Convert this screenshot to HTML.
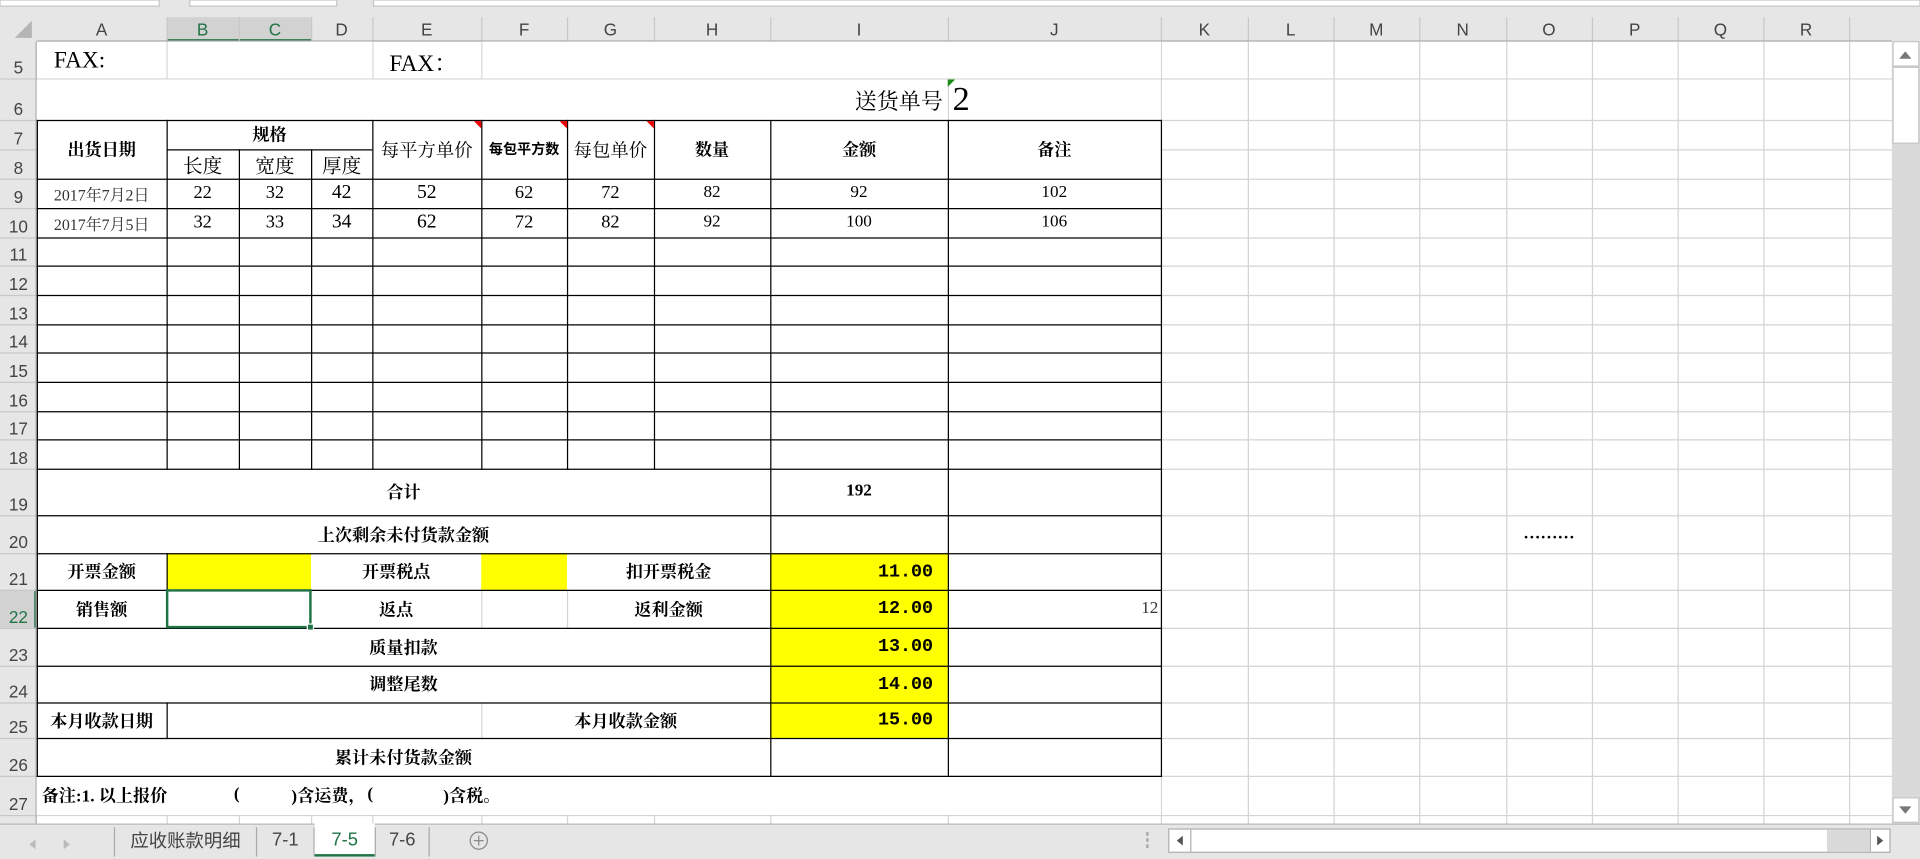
<!DOCTYPE html>
<html><head><meta charset="utf-8">
<style>
html,body{margin:0;padding:0;background:#fff;overflow:hidden;width:1920px;height:859px}
#w{position:absolute;left:0;top:0;width:1568px;height:702px;transform:scale(1.22449,1.22365);transform-origin:0 0;background:#fff;overflow:hidden}
.t{position:absolute;display:flex;align-items:center;justify-content:center;white-space:nowrap;font-family:"Liberation Serif","Noto Serif CJK SC",serif;color:#000}
.b{font-weight:bold}
.m{font-family:"Liberation Mono","Noto Serif CJK SC",monospace}
.h{position:absolute;top:14px;height:20px;display:flex;align-items:center;justify-content:center;font-family:"Liberation Sans",sans-serif;font-size:14px;color:#444}
.r{position:absolute;left:0;width:30px;display:flex;align-items:flex-end;justify-content:center;padding-bottom:1px;box-sizing:border-box;font-family:"Liberation Sans",sans-serif;font-size:14px;color:#444}
</style></head><body><div id="w">
<svg width="1568" height="702" style="position:absolute;left:0;top:0">
<rect x="0" y="0" width="1568" height="34" fill="#e6e6e6"/>
<rect x="0" y="0" width="130" height="5" fill="#fff" stroke="#c6c6c6"/>
<rect x="155" y="0" width="120" height="5" fill="#fff" stroke="#c6c6c6"/>
<rect x="305" y="0" width="1263" height="5" fill="#fff" stroke="#c6c6c6"/>
<rect x="136" y="14" width="118" height="20" fill="#d2d2d2"/>
<rect x="136" y="32" width="118" height="2" fill="#217346"/>
<rect x="0" y="34" width="30" height="639" fill="#e6e6e6"/>
<rect x="0" y="482" width="30" height="31" fill="#d2d2d2"/>
<rect x="28" y="482" width="2" height="31" fill="#217346"/>
<polygon points="26,17 26,31 12,31" fill="#b5b5b5"/>
<g stroke="#c8c8c8" stroke-width="1">
<line x1="136.5" y1="14" x2="136.5" y2="34"/><line x1="195.5" y1="14" x2="195.5" y2="34"/><line x1="254.5" y1="14" x2="254.5" y2="34"/><line x1="304.5" y1="14" x2="304.5" y2="34"/><line x1="393.5" y1="14" x2="393.5" y2="34"/><line x1="463.5" y1="14" x2="463.5" y2="34"/><line x1="534.5" y1="14" x2="534.5" y2="34"/><line x1="629.5" y1="14" x2="629.5" y2="34"/><line x1="774.5" y1="14" x2="774.5" y2="34"/><line x1="948.5" y1="14" x2="948.5" y2="34"/><line x1="1019.5" y1="14" x2="1019.5" y2="34"/><line x1="1089.5" y1="14" x2="1089.5" y2="34"/><line x1="1159.5" y1="14" x2="1159.5" y2="34"/><line x1="1230.5" y1="14" x2="1230.5" y2="34"/><line x1="1300.5" y1="14" x2="1300.5" y2="34"/><line x1="1370.5" y1="14" x2="1370.5" y2="34"/><line x1="1440.5" y1="14" x2="1440.5" y2="34"/><line x1="1510.5" y1="14" x2="1510.5" y2="34"/>
<line x1="0" y1="64.5" x2="30" y2="64.5"/><line x1="0" y1="98.5" x2="30" y2="98.5"/><line x1="0" y1="122.5" x2="30" y2="122.5"/><line x1="0" y1="146.5" x2="30" y2="146.5"/><line x1="0" y1="170.5" x2="30" y2="170.5"/><line x1="0" y1="194.5" x2="30" y2="194.5"/><line x1="0" y1="217.5" x2="30" y2="217.5"/><line x1="0" y1="241.5" x2="30" y2="241.5"/><line x1="0" y1="265.5" x2="30" y2="265.5"/><line x1="0" y1="288.5" x2="30" y2="288.5"/><line x1="0" y1="312.5" x2="30" y2="312.5"/><line x1="0" y1="336.5" x2="30" y2="336.5"/><line x1="0" y1="359.5" x2="30" y2="359.5"/><line x1="0" y1="383.5" x2="30" y2="383.5"/><line x1="0" y1="421.5" x2="30" y2="421.5"/><line x1="0" y1="452.5" x2="30" y2="452.5"/><line x1="0" y1="482.5" x2="30" y2="482.5"/><line x1="0" y1="513.5" x2="30" y2="513.5"/><line x1="0" y1="544.5" x2="30" y2="544.5"/><line x1="0" y1="574.5" x2="30" y2="574.5"/><line x1="0" y1="603.5" x2="30" y2="603.5"/><line x1="0" y1="634.5" x2="30" y2="634.5"/><line x1="0" y1="666.5" x2="30" y2="666.5"/>
</g>
<line x1="30" y1="33.5" x2="1545" y2="33.5" stroke="#ababab"/>
<line x1="29.5" y1="34" x2="29.5" y2="673" stroke="#ababab"/>
<g stroke="#d4d4d4" stroke-width="1">
<line x1="136.5" y1="34" x2="136.5" y2="673"/><line x1="195.5" y1="34" x2="195.5" y2="673"/><line x1="254.5" y1="34" x2="254.5" y2="673"/><line x1="304.5" y1="34" x2="304.5" y2="673"/><line x1="393.5" y1="34" x2="393.5" y2="673"/><line x1="463.5" y1="34" x2="463.5" y2="673"/><line x1="534.5" y1="34" x2="534.5" y2="673"/><line x1="629.5" y1="34" x2="629.5" y2="673"/><line x1="774.5" y1="34" x2="774.5" y2="673"/><line x1="948.5" y1="34" x2="948.5" y2="673"/><line x1="1019.5" y1="34" x2="1019.5" y2="673"/><line x1="1089.5" y1="34" x2="1089.5" y2="673"/><line x1="1159.5" y1="34" x2="1159.5" y2="673"/><line x1="1230.5" y1="34" x2="1230.5" y2="673"/><line x1="1300.5" y1="34" x2="1300.5" y2="673"/><line x1="1370.5" y1="34" x2="1370.5" y2="673"/><line x1="1440.5" y1="34" x2="1440.5" y2="673"/><line x1="1510.5" y1="34" x2="1510.5" y2="673"/>
<line x1="30" y1="64.5" x2="1545" y2="64.5"/><line x1="30" y1="98.5" x2="1545" y2="98.5"/><line x1="30" y1="122.5" x2="1545" y2="122.5"/><line x1="30" y1="146.5" x2="1545" y2="146.5"/><line x1="30" y1="170.5" x2="1545" y2="170.5"/><line x1="30" y1="194.5" x2="1545" y2="194.5"/><line x1="30" y1="217.5" x2="1545" y2="217.5"/><line x1="30" y1="241.5" x2="1545" y2="241.5"/><line x1="30" y1="265.5" x2="1545" y2="265.5"/><line x1="30" y1="288.5" x2="1545" y2="288.5"/><line x1="30" y1="312.5" x2="1545" y2="312.5"/><line x1="30" y1="336.5" x2="1545" y2="336.5"/><line x1="30" y1="359.5" x2="1545" y2="359.5"/><line x1="30" y1="383.5" x2="1545" y2="383.5"/><line x1="30" y1="421.5" x2="1545" y2="421.5"/><line x1="30" y1="452.5" x2="1545" y2="452.5"/><line x1="30" y1="482.5" x2="1545" y2="482.5"/><line x1="30" y1="513.5" x2="1545" y2="513.5"/><line x1="30" y1="544.5" x2="1545" y2="544.5"/><line x1="30" y1="574.5" x2="1545" y2="574.5"/><line x1="30" y1="603.5" x2="1545" y2="603.5"/><line x1="30" y1="634.5" x2="1545" y2="634.5"/><line x1="30" y1="666.5" x2="1545" y2="666.5"/>
</g>
<rect x="137" y="34" width="167" height="30" fill="#fff"/>
<rect x="394" y="34" width="554" height="30" fill="#fff"/>
<rect x="30" y="65" width="744" height="33" fill="#fff"/>
<rect x="30" y="98" width="918" height="536" fill="#fff"/>
<rect x="30" y="635" width="918" height="31" fill="#fff"/>
<rect x="136" y="452" width="118" height="30" fill="#ffff00"/>
<rect x="393" y="452" width="70" height="30" fill="#ffff00"/>
<rect x="629" y="452" width="145" height="151" fill="#ffff00"/>
<g stroke="#d4d4d4" stroke-width="1">
<line x1="393.5" y1="483" x2="393.5" y2="513"/><line x1="463.5" y1="483" x2="463.5" y2="513"/><line x1="393.5" y1="575" x2="393.5" y2="603"/>
</g>
<g stroke="#000" stroke-width="1">
<line x1="30" y1="98.5" x2="949" y2="98.5"/><line x1="30" y1="146.5" x2="949" y2="146.5"/><line x1="30" y1="170.5" x2="949" y2="170.5"/><line x1="30" y1="194.5" x2="949" y2="194.5"/><line x1="30" y1="217.5" x2="949" y2="217.5"/><line x1="30" y1="241.5" x2="949" y2="241.5"/><line x1="30" y1="265.5" x2="949" y2="265.5"/><line x1="30" y1="288.5" x2="949" y2="288.5"/><line x1="30" y1="312.5" x2="949" y2="312.5"/><line x1="30" y1="336.5" x2="949" y2="336.5"/><line x1="30" y1="359.5" x2="949" y2="359.5"/><line x1="30" y1="383.5" x2="949" y2="383.5"/><line x1="30" y1="421.5" x2="949" y2="421.5"/><line x1="30" y1="452.5" x2="949" y2="452.5"/><line x1="30" y1="482.5" x2="949" y2="482.5"/><line x1="30" y1="513.5" x2="949" y2="513.5"/><line x1="30" y1="544.5" x2="949" y2="544.5"/><line x1="30" y1="574.5" x2="949" y2="574.5"/><line x1="30" y1="603.5" x2="949" y2="603.5"/><line x1="30" y1="634.5" x2="949" y2="634.5"/>
<line x1="136" y1="122.5" x2="304" y2="122.5"/>
<line x1="30.5" y1="98" x2="30.5" y2="635"/><line x1="948.5" y1="98" x2="948.5" y2="635"/><line x1="774.5" y1="98" x2="774.5" y2="635"/><line x1="629.5" y1="98" x2="629.5" y2="635"/>
<line x1="136.5" y1="98" x2="136.5" y2="384"/><line x1="136.5" y1="452" x2="136.5" y2="514"/><line x1="136.5" y1="574" x2="136.5" y2="604"/>
<line x1="195.5" y1="122" x2="195.5" y2="384"/>
<line x1="254.5" y1="122" x2="254.5" y2="384"/>
<line x1="304.5" y1="98" x2="304.5" y2="384"/>
<line x1="393.5" y1="98" x2="393.5" y2="384"/>
<line x1="463.5" y1="98" x2="463.5" y2="384"/>
<line x1="534.5" y1="98" x2="534.5" y2="384"/>
</g>
<polygon points="387,99 393,99 393,105" fill="#e00"/>
<polygon points="457,99 463,99 463,105" fill="#e00"/>
<polygon points="528,99 534,99 534,105" fill="#e00"/>
<polygon points="774,65 780,65 774,71" fill="#1a8a1a"/>
<rect x="136.5" y="482.5" width="117" height="30" fill="none" stroke="#217346" stroke-width="2"/>
<rect x="251" y="510" width="5" height="5" fill="#217346" stroke="#fff" stroke-width="1"/>
<rect x="1545" y="34" width="23" height="639" fill="#dadada"/>
<rect x="1546" y="34" width="21" height="20" fill="#fff" stroke="#c6c6c6"/>
<polygon points="1551,48 1561,48 1556,42" fill="#777"/>
<rect x="1546" y="55" width="21" height="62" fill="#fff" stroke="#c6c6c6"/>
<rect x="1546" y="652" width="21" height="20" fill="#fff" stroke="#c6c6c6"/>
<polygon points="1551,659 1561,659 1556,665" fill="#777"/>
<rect x="0" y="673" width="1568" height="29" fill="#e6e6e6"/>
<line x1="0" y1="673.5" x2="1568" y2="673.5" stroke="#b8b8b8"/>
<polygon points="29,686 24,690 29,694" fill="#bbb"/>
<polygon points="52,686 57,690 52,694" fill="#bbb"/>
<line x1="93.5" y1="676" x2="93.5" y2="700" stroke="#aaa"/>
<line x1="209.5" y1="676" x2="209.5" y2="700" stroke="#aaa"/>
<line x1="256.5" y1="676" x2="256.5" y2="700" stroke="#aaa"/>
<rect x="257" y="673" width="49" height="27" fill="#fff"/>
<rect x="257" y="698" width="49" height="2" fill="#217346"/>
<line x1="306.5" y1="676" x2="306.5" y2="700" stroke="#aaa"/>
<line x1="350.5" y1="676" x2="350.5" y2="700" stroke="#aaa"/>
<circle cx="391" cy="687" r="7" fill="none" stroke="#888"/>
<line x1="387" y1="687" x2="395" y2="687" stroke="#888"/><line x1="391" y1="683" x2="391" y2="691" stroke="#888"/>
<rect x="936" y="680" width="2" height="3" fill="#aaa"/><rect x="936" y="685" width="2" height="3" fill="#aaa"/><rect x="936" y="690" width="2" height="3" fill="#aaa"/>
<rect x="954.5" y="677.5" width="589" height="19" fill="#fff" stroke="#b0b0b0"/>
<rect x="1492" y="678" width="35" height="18" fill="#dadada"/>
<line x1="972.5" y1="678" x2="972.5" y2="696" stroke="#b0b0b0"/>
<line x1="1527.5" y1="678" x2="1527.5" y2="696" stroke="#b0b0b0"/>
<polygon points="966,683 961,687 966,691" fill="#555"/>
<polygon points="1533,683 1538,687 1533,691" fill="#555"/>
</svg>

<div class="h" style="left:30px;width:106px">A</div>
<div class="h" style="left:136px;width:59px;color:#217346">B</div>
<div class="h" style="left:195px;width:59px;color:#217346">C</div>
<div class="h" style="left:254px;width:50px">D</div>
<div class="h" style="left:304px;width:89px">E</div>
<div class="h" style="left:393px;width:70px">F</div>
<div class="h" style="left:463px;width:71px">G</div>
<div class="h" style="left:534px;width:95px">H</div>
<div class="h" style="left:629px;width:145px">I</div>
<div class="h" style="left:774px;width:174px">J</div>
<div class="h" style="left:948px;width:71px">K</div>
<div class="h" style="left:1019px;width:70px">L</div>
<div class="h" style="left:1089px;width:70px">M</div>
<div class="h" style="left:1159px;width:71px">N</div>
<div class="h" style="left:1230px;width:70px">O</div>
<div class="h" style="left:1300px;width:70px">P</div>
<div class="h" style="left:1370px;width:70px">Q</div>
<div class="h" style="left:1440px;width:70px">R</div>
<div class="r" style="top:34px;height:30px">5</div>
<div class="r" style="top:64px;height:34px">6</div>
<div class="r" style="top:98px;height:24px">7</div>
<div class="r" style="top:122px;height:24px">8</div>
<div class="r" style="top:146px;height:24px">9</div>
<div class="r" style="top:170px;height:24px">10</div>
<div class="r" style="top:194px;height:23px">11</div>
<div class="r" style="top:217px;height:24px">12</div>
<div class="r" style="top:241px;height:24px">13</div>
<div class="r" style="top:265px;height:23px">14</div>
<div class="r" style="top:288px;height:24px">15</div>
<div class="r" style="top:312px;height:24px">16</div>
<div class="r" style="top:336px;height:23px">17</div>
<div class="r" style="top:359px;height:24px">18</div>
<div class="r" style="top:383px;height:38px">19</div>
<div class="r" style="top:421px;height:31px">20</div>
<div class="r" style="top:452px;height:30px">21</div>
<div class="r" style="top:482px;height:31px;color:#217346">22</div>
<div class="r" style="top:513px;height:31px">23</div>
<div class="r" style="top:544px;height:30px">24</div>
<div class="r" style="top:574px;height:29px">25</div>
<div class="r" style="top:603px;height:31px">26</div>
<div class="r" style="top:634px;height:32px">27</div>

<div class="t" style="left:44px;top:36px;height:28px;font-size:19px;justify-content:flex-start">FAX:</div>
<div class="t" style="left:318px;top:36px;height:28px;font-size:19px;justify-content:flex-start">FAX：</div>
<div class="t" style="left:600px;top:66px;width:170px;height:32px;font-size:18px;justify-content:flex-end">送货单号</div>
<div class="t" style="left:778px;top:64px;height:36px;font-size:28px;justify-content:flex-start">2</div>

<div class="t b" style="left:30px;top:98px;width:106px;height:48px;font-size:14px">出货日期</div>
<div class="t b" style="left:136px;top:98px;width:168px;height:24px;font-size:14px">规格</div>
<div class="t" style="left:136px;top:122px;width:59px;height:24px;font-size:16px">长度</div>
<div class="t" style="left:195px;top:122px;width:59px;height:24px;font-size:16px">宽度</div>
<div class="t" style="left:254px;top:122px;width:50px;height:24px;font-size:16px">厚度</div>
<div class="t" style="left:304px;top:98px;width:89px;height:48px;font-size:15px">每平方单价</div>
<div class="t b" style="left:393px;top:98px;width:70px;height:48px;font-size:11.5px;font-family:'Liberation Sans','Noto Sans CJK SC',sans-serif">每包平方数</div>
<div class="t" style="left:463px;top:98px;width:71px;height:48px;font-size:15px">每包单价</div>
<div class="t b" style="left:534px;top:98px;width:95px;height:48px;font-size:14px">数量</div>
<div class="t b" style="left:629px;top:98px;width:145px;height:48px;font-size:14px">金额</div>
<div class="t b" style="left:774px;top:98px;width:174px;height:48px;font-size:14px">备注</div>

<div class="t" style="left:30px;top:146px;width:106px;height:24px;font-size:13px;color:#333">2017年7月2日</div>
<div class="t" style="left:136px;top:146px;width:59px;height:24px;font-size:15px">22</div>
<div class="t" style="left:195px;top:146px;width:59px;height:24px;font-size:15px">32</div>
<div class="t" style="left:254px;top:146px;width:50px;height:24px;font-size:16px">42</div>
<div class="t" style="left:304px;top:146px;width:89px;height:24px;font-size:16px">52</div>
<div class="t" style="left:393px;top:146px;width:70px;height:24px;font-size:15px">62</div>
<div class="t" style="left:463px;top:146px;width:71px;height:24px;font-size:15px">72</div>
<div class="t" style="left:534px;top:146px;width:95px;height:24px;font-size:14px">82</div>
<div class="t" style="left:629px;top:146px;width:145px;height:24px;font-size:14px">92</div>
<div class="t" style="left:774px;top:146px;width:174px;height:24px;font-size:14px">102</div>
<div class="t" style="left:30px;top:170px;width:106px;height:24px;font-size:13px;color:#333">2017年7月5日</div>
<div class="t" style="left:136px;top:170px;width:59px;height:24px;font-size:15px">32</div>
<div class="t" style="left:195px;top:170px;width:59px;height:24px;font-size:15px">33</div>
<div class="t" style="left:254px;top:170px;width:50px;height:24px;font-size:16px">34</div>
<div class="t" style="left:304px;top:170px;width:89px;height:24px;font-size:16px">62</div>
<div class="t" style="left:393px;top:170px;width:70px;height:24px;font-size:15px">72</div>
<div class="t" style="left:463px;top:170px;width:71px;height:24px;font-size:15px">82</div>
<div class="t" style="left:534px;top:170px;width:95px;height:24px;font-size:14px">92</div>
<div class="t" style="left:629px;top:170px;width:145px;height:24px;font-size:14px">100</div>
<div class="t" style="left:774px;top:170px;width:174px;height:24px;font-size:14px">106</div>

<div class="t b" style="left:30px;top:383px;width:599px;height:38px;font-size:14px">合计</div>
<div class="t b" style="left:629px;top:383px;width:145px;height:38px;font-size:14px">192</div>
<div class="t b" style="left:30px;top:421px;width:599px;height:31px;font-size:14px">上次剩余未付货款金额</div>
<div class="t b" style="left:1230px;top:421px;width:70px;height:31px;font-size:14px">………</div>
<div class="t b" style="left:30px;top:452px;width:106px;height:30px;font-size:14px">开票金额</div>
<div class="t b" style="left:254px;top:452px;width:139px;height:30px;font-size:14px">开票税点</div>
<div class="t b" style="left:463px;top:452px;width:166px;height:30px;font-size:14px">扣开票税金</div>
<div class="t b m" style="left:629px;top:452px;width:133px;height:30px;font-size:15px;justify-content:flex-end">11.00</div>
<div class="t b" style="left:30px;top:482px;width:106px;height:31px;font-size:14px">销售额</div>
<div class="t b" style="left:254px;top:482px;width:139px;height:31px;font-size:14px">返点</div>
<div class="t b" style="left:463px;top:482px;width:166px;height:31px;font-size:14px">返利金额</div>
<div class="t b m" style="left:629px;top:482px;width:133px;height:31px;font-size:15px;justify-content:flex-end">12.00</div>
<div class="t" style="left:774px;top:482px;width:172px;height:31px;font-size:14px;justify-content:flex-end;color:#333">12</div>
<div class="t b" style="left:30px;top:513px;width:599px;height:31px;font-size:14px">质量扣款</div>
<div class="t b m" style="left:629px;top:513px;width:133px;height:31px;font-size:15px;justify-content:flex-end">13.00</div>
<div class="t b" style="left:30px;top:544px;width:599px;height:30px;font-size:14px">调整尾数</div>
<div class="t b m" style="left:629px;top:544px;width:133px;height:30px;font-size:15px;justify-content:flex-end">14.00</div>
<div class="t b" style="left:30px;top:574px;width:106px;height:29px;font-size:14px">本月收款日期</div>
<div class="t b" style="left:393px;top:574px;width:236px;height:29px;font-size:14px">本月收款金额</div>
<div class="t b m" style="left:629px;top:574px;width:133px;height:29px;font-size:15px;justify-content:flex-end">15.00</div>
<div class="t b" style="left:30px;top:603px;width:599px;height:31px;font-size:14px">累计未付货款金额</div>
<div class="t b" style="left:34px;top:634px;height:32px;font-size:14px;justify-content:flex-start">备注:1. 以上报价</div>
<div class="t b" style="left:191px;top:634px;height:32px;font-size:14px;justify-content:flex-start">(</div>
<div class="t b" style="left:238px;top:634px;height:32px;font-size:14px;justify-content:flex-start">)含运费，</div>
<div class="t b" style="left:300px;top:634px;height:32px;font-size:14px;justify-content:flex-start">(</div>
<div class="t b" style="left:362px;top:634px;height:32px;font-size:14px;justify-content:flex-start">)含税。</div>

<div class="t" style="left:94px;top:674px;width:115px;height:25px;font-size:15px;color:#444;font-family:'Liberation Sans','Noto Sans CJK SC',sans-serif">应收账款明细</div>
<div class="t" style="left:210px;top:674px;width:46px;height:25px;font-size:15px;color:#444;font-family:'Liberation Sans',sans-serif">7-1</div>
<div class="t" style="left:257px;top:674px;width:49px;height:25px;font-size:15px;color:#217346;font-family:'Liberation Sans',sans-serif">7-5</div>
<div class="t" style="left:307px;top:674px;width:43px;height:25px;font-size:15px;color:#444;font-family:'Liberation Sans',sans-serif">7-6</div>
</div></body></html>
